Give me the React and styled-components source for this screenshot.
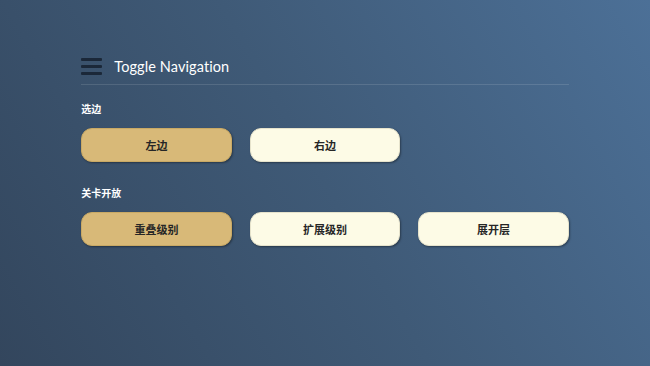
import React from 'react'
import styled, { createGlobalStyle } from 'styled-components'

const GlobalStyle = createGlobalStyle`
  html, body {
    margin: 0;
    padding: 0;
    height: 100%;
  }
  body {
    font-family: "Open Sans", "Noto Sans CJK SC", sans-serif;
    background: linear-gradient(60deg, #33465d 0%, #3f5a77 50%, #4c7097 100%);
    min-height: 366px;
  }
`

const Page = styled.div`
  width: 75%;
  margin: 0 auto;
  padding-top: 48px;
`

const Header = styled.div`
  display: flex;
  align-items: center;
  gap: 12px;
  height: 36px;
  border-bottom: 1px solid rgba(255, 255, 255, 0.12);
`

const Burger = styled.div`
  display: flex;
  flex-direction: column;
  gap: 4px;
  width: 21px;

  span {
    display: block;
    height: 3px;
    background: #1b2839;
    border-radius: 1px;
  }
`

const Title = styled.span`
  color: #ffffff;
  font-size: 14.5px;
  font-family: Lato, sans-serif;
  letter-spacing: 0.1px;
`

const Section = styled.div`
  margin-top: ${p => p.gapTop}px;
`

const Label = styled.div`
  color: #ffffff;
  font-size: 10px;
  font-weight: bold;
  font-family: "Noto Sans CJK SC", sans-serif;
  margin-bottom: 12px;
`

const ButtonRow = styled.div`
  display: grid;
  grid-template-columns: repeat(3, 1fr);
  column-gap: 18px;
`

const Choice = styled.button`
  height: 34px;
  border-radius: 11px;
  border: 1px solid ${p => (p.active ? '#c9a964' : '#e6e3cc')};
  background: ${p => (p.active ? '#d8b978' : '#fdfbe6')};
  box-shadow: 1px 1px 2px rgba(0, 0, 0, 0.35);
  color: #262626;
  font-size: 11px;
  font-weight: bold;
  font-family: "Noto Sans CJK SC", sans-serif;
  cursor: pointer;
`

export default function App() {
  return (
    <>
      <GlobalStyle />
      <Page>
        <Header>
          <Burger>
            <span />
            <span />
            <span />
          </Burger>
          <Title>Toggle Navigation</Title>
        </Header>
        <Section gapTop={16}>
          <Label>选边</Label>
          <ButtonRow>
            <Choice active>左边</Choice>
            <Choice>右边</Choice>
          </ButtonRow>
        </Section>
        <Section gapTop={23}>
          <Label>关卡开放</Label>
          <ButtonRow>
            <Choice active>重叠级别</Choice>
            <Choice>扩展级别</Choice>
            <Choice>展开层</Choice>
          </ButtonRow>
        </Section>
      </Page>
    </>
  )
}
